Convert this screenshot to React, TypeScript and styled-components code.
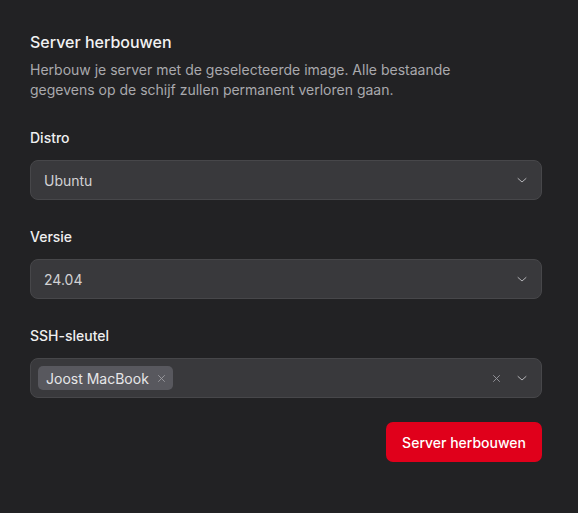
import React from 'react'
import styled, { createGlobalStyle } from 'styled-components'

const GlobalStyle = createGlobalStyle`
    html, body {
        margin: 0;
        padding: 0;
        background: #222224;
    }
    body {
        font-family: Inter, "Noto Sans", sans-serif;
        -webkit-font-smoothing: antialiased;
    }
`

const Chevron = () => (
    <svg width="12" height="12" viewBox="0 0 24 24" fill="none" stroke="currentColor" strokeWidth="2" strokeLinecap="round" strokeLinejoin="round">
        <path d="M4 9l8 7 8-7" />
    </svg>
)

const Cross = ({ size = 10 }: { size?: number }) => (
    <svg width={size} height={size} viewBox="0 0 24 24" fill="none" stroke="currentColor" strokeWidth="2.4" strokeLinecap="round">
        <path d="M4 4l16 16M20 4L4 20" />
    </svg>
)

const App: React.FC = () => {
    return (
        <>
            <GlobalStyle />
            <Panel>
                <Header>
                    <h2>Server herbouwen</h2>
                    <p>Herbouw je server met de geselecteerde image. Alle bestaande gegevens op de schijf zullen permanent verloren gaan.</p>
                </Header>

                <Fields>
                    <Field>
                        <Label>Distro</Label>
                        <Select>
                            <Value>Ubuntu</Value>
                            <Indicators><Chevron /></Indicators>
                        </Select>
                    </Field>

                    <Field>
                        <Label>Versie</Label>
                        <Select>
                            <Value>24.04</Value>
                            <Indicators><Chevron /></Indicators>
                        </Select>
                    </Field>

                    <Field>
                        <Label>SSH-sleutel</Label>
                        <Select $multi>
                            <Tags>
                                <Tag>
                                    Joost MacBook
                                    <TagRemove><Cross size={9} /></TagRemove>
                                </Tag>
                            </Tags>
                            <Indicators>
                                <ClearButton><Cross size={9} /></ClearButton>
                                <Chevron />
                            </Indicators>
                        </Select>
                    </Field>
                </Fields>

                <Actions>
                    <SubmitButton type="button">Server herbouwen</SubmitButton>
                </Actions>
            </Panel>
        </>
    )
}

export default App

const Panel = styled.div`
    width: 512px;
    padding: 30px 36px 30px 30px;
    display: flex;
    flex-direction: column;
`

const Header = styled.div`
    margin-bottom: 28px;

    h2 {
        margin: 0;
        font-size: 16px;
        line-height: 24px;
        font-weight: 450;
        color: #f2f2f3;
    }

    p {
        margin: 6px 0 0;
        font-size: 14px;
        line-height: 20px;
        color: #a9a9ad;
        max-width: 440px;
    }
`

const Fields = styled.div`
    display: flex;
    flex-direction: column;
    gap: 27px;
    margin-bottom: 24px;
`

const Field = styled.div`
    display: flex;
    flex-direction: column;
    gap: 12px;
`

const Label = styled.label`
    font-size: 14px;
    line-height: 20px;
    font-weight: 500;
    color: #efeff0;
`

const Select = styled.div<{ $multi?: boolean }>`
    box-sizing: border-box;
    height: 40px;
    display: flex;
    align-items: center;
    justify-content: space-between;
    padding: ${({ $multi }) => ($multi ? '0 13px 0 7px' : '0 13px 0 13px')};
    background: #39393c;
    border: 1px solid #47474a;
    border-radius: 8px;
`

const Value = styled.span`
    font-size: 14px;
    color: #d2d2d4;
`

const Indicators = styled.div`
    display: flex;
    align-items: center;
    gap: 15px;
    color: #b4b4b8;
`

const ClearButton = styled.span`
    display: inline-flex;
    color: #9a9aa0;
`

const Tags = styled.div`
    display: flex;
    gap: 6px;
`

const Tag = styled.span`
    display: inline-flex;
    align-items: center;
    gap: 8px;
    height: 24px;
    padding: 0 7px 0 8px;
    border-radius: 5px;
    background: #58585e;
    font-size: 14px;
    color: #e6e6e8;
`

const TagRemove = styled.span`
    display: inline-flex;
    color: #9c9ca2;
`

const Actions = styled.div`
    display: flex;
    justify-content: flex-end;
`

const SubmitButton = styled.button`
    height: 40px;
    padding: 0 16px;
    border: none;
    border-radius: 7px;
    background: #e0001b;
    color: #ffffff;
    font-family: inherit;
    font-size: 14px;
    font-weight: 500;
    cursor: pointer;
`
